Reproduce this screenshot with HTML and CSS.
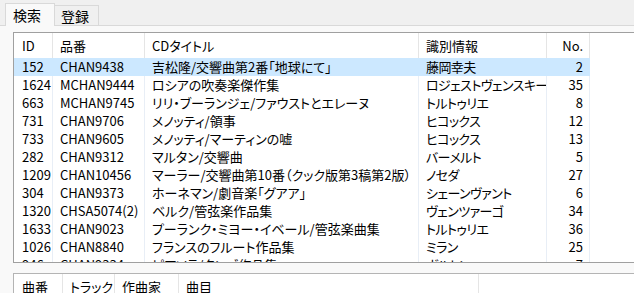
FILE: index.html
```html
<!DOCTYPE html>
<html lang="ja">
<head>
<meta charset="utf-8">
<title>検索</title>
<link rel="stylesheet" href="styles.css">
</head>
<body>
<div class="window">
  <div class="tabbar">
    <div class="tab-lead"></div>
    <div class="tab active">検索</div>
    <div class="tab">登録</div>
    <div class="tab-fill"></div>
  </div>
  <div class="page">
    <div class="list cd-list">
      <div class="grid header">
        <div class="cell">ID</div>
        <div class="cell">品番</div>
        <div class="cell">CDタイトル</div>
        <div class="cell">識別情報</div>
        <div class="cell num">No.</div>
        <div class="cell rest"></div>
      </div>
      <div class="grid row selected">
        <div class="cell">152</div><div class="cell">CHAN9438</div><div class="cell">吉松隆/交響曲第2番「地球にて」</div><div class="cell artist">藤岡幸夫</div><div class="cell num">2</div><div class="cell rest"></div>
      </div>
      <div class="grid row">
        <div class="cell">1624</div><div class="cell">MCHAN9444</div><div class="cell">ロシアの吹奏楽傑作集</div><div class="cell artist">ロジェストヴェンスキー</div><div class="cell num">35</div><div class="cell rest"></div>
      </div>
      <div class="grid row">
        <div class="cell">663</div><div class="cell">MCHAN9745</div><div class="cell">リリ・ブーランジェ/ファウストとエレーヌ</div><div class="cell artist">トルトゥリエ</div><div class="cell num">8</div><div class="cell rest"></div>
      </div>
      <div class="grid row">
        <div class="cell">731</div><div class="cell">CHAN9706</div><div class="cell">メノッティ/領事</div><div class="cell artist">ヒコックス</div><div class="cell num">12</div><div class="cell rest"></div>
      </div>
      <div class="grid row">
        <div class="cell">733</div><div class="cell">CHAN9605</div><div class="cell">メノッティ/マーティンの嘘</div><div class="cell artist">ヒコックス</div><div class="cell num">13</div><div class="cell rest"></div>
      </div>
      <div class="grid row">
        <div class="cell">282</div><div class="cell">CHAN9312</div><div class="cell">マルタン/交響曲</div><div class="cell artist">バーメルト</div><div class="cell num">5</div><div class="cell rest"></div>
      </div>
      <div class="grid row">
        <div class="cell">1209</div><div class="cell">CHAN10456</div><div class="cell">マーラー/交響曲第10番（クック版第3稿第2版）</div><div class="cell artist">ノセダ</div><div class="cell num">27</div><div class="cell rest"></div>
      </div>
      <div class="grid row">
        <div class="cell">304</div><div class="cell">CHAN9373</div><div class="cell">ホーネマン/劇音楽「グアア」</div><div class="cell artist">シェーンヴァント</div><div class="cell num">6</div><div class="cell rest"></div>
      </div>
      <div class="grid row">
        <div class="cell">1320</div><div class="cell">CHSA5074(2)</div><div class="cell">ベルク/管弦楽作品集</div><div class="cell artist">ヴェンツァーゴ</div><div class="cell num">34</div><div class="cell rest"></div>
      </div>
      <div class="grid row">
        <div class="cell">1633</div><div class="cell">CHAN9023</div><div class="cell">プーランク・ミヨー・イベール/管弦楽曲集</div><div class="cell artist">トルトゥリエ</div><div class="cell num">36</div><div class="cell rest"></div>
      </div>
      <div class="grid row">
        <div class="cell">1026</div><div class="cell">CHAN8840</div><div class="cell">フランスのフルート作品集</div><div class="cell artist">ミラン</div><div class="cell num">25</div><div class="cell rest"></div>
      </div>
      <div class="grid row">
        <div class="cell">946</div><div class="cell">CHAN9334</div><div class="cell">ピアソラ/タンゴ作品集</div><div class="cell artist">ボルトン</div><div class="cell num">7</div><div class="cell rest"></div>
      </div>
    </div>
    <div class="list track-list">
      <div class="tgrid header">
        <div class="cell">曲番</div>
        <div class="cell">トラック</div>
        <div class="cell">作曲家</div>
        <div class="cell">曲目</div>
        <div class="cell rest"></div>
      </div>
    </div>
  </div>
</div>
</body>
</html>
```

FILE: styles.css
```css
html, body {
  margin: 0;
  padding: 0;
}

body {
  width: 634px;
  height: 293px;
  overflow: hidden;
  background: #f0f0f0;
  color: #000;
  font-family: "Noto Sans CJK JP", "Noto Sans", sans-serif;
  font-size: 13px;
  font-feature-settings: "palt";
}

.window {
  width: 634px;
  height: 293px;
  overflow: hidden;
}

.tabbar {
  display: flex;
  align-items: flex-end;
  height: 26px;
}

.tab-lead {
  width: 5px;
  border-bottom: 1px solid #d9d9d9;
}

.tab-fill {
  flex: 1;
  border-bottom: 1px solid #d9d9d9;
}

.tab {
  box-sizing: border-box;
  line-height: 19px;
  white-space: nowrap;
  font-size: 14px;
}

.tab.active {
  width: 50px;
  height: 23px;
  padding-left: 7px;
  padding-top: 2px;
  background: #f9f9f9;
  border: 1px solid #d9d9d9;
  border-bottom: none;
}

.tab:not(.active) {
  width: 44px;
  height: 21px;
  padding-left: 6px;
  padding-top: 1px;
  background: #f0f0f0;
  border: 1px solid #d9d9d9;
  border-left: none;
}

.page {
  background: #f9f9f9;
  height: 267px;
  padding-top: 6px;
  padding-left: 13px;
  box-sizing: border-box;
}

.list {
  width: 700px;
  background: #fff;
  border: 1px solid #a0a0a0;
  overflow: hidden;
}

.cd-list {
  height: 231px;
  box-sizing: border-box;
}

.track-list {
  margin-top: 10px;
  height: 60px;
  border-color: #b4b4b4;
}

.grid {
  display: grid;
  grid-template-columns: 39px 92px 274px 128px 43px 1fr;
}

.tgrid {
  display: grid;
  grid-template-columns: 49px 52px 64px 300px 1fr;
}

.cell {
  box-sizing: border-box;
  padding-left: 7px;
  white-space: nowrap;
  overflow: hidden;
  border-right: 1px solid #e8eef6;
}

.cell:first-child {
  padding-left: 8px;
}

.cell.artist {
  letter-spacing: -0.6px;
}

.cell.num {
  text-align: right;
  padding-left: 0;
  padding-right: 6px;
}

.cell.rest {
  border-right: none;
}

.header {
  height: 25px;
  line-height: 25px;
}

.header .cell {
  border-right-color: #e5e5e5;
}

.row {
  height: 18px;
  line-height: 18px;
}

.row.selected .cell {
  background: #cce8ff;
  border-right-color: #cce8ff;
}

.row.selected .cell.rest {
  background: transparent;
}
```
